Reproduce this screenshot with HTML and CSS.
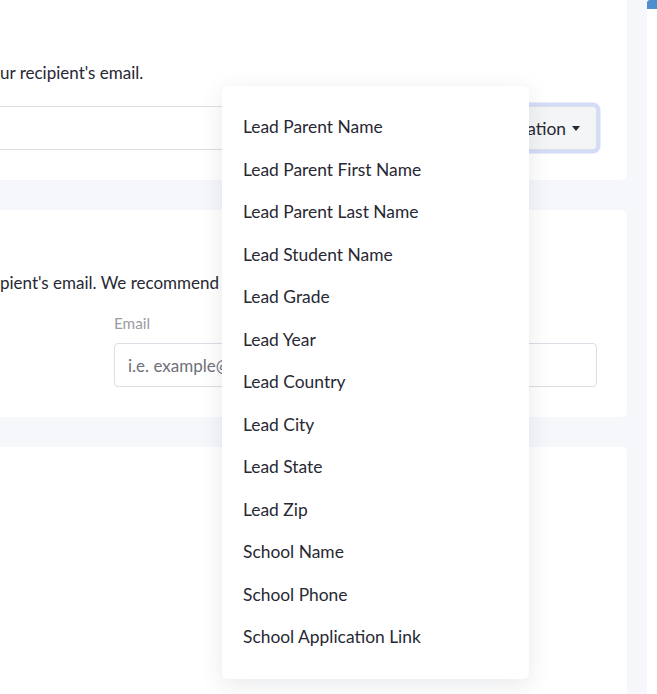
FILE: index.html
```html
<!DOCTYPE html>
<html lang="en">
<head>
<meta charset="utf-8">
<title>Personalization</title>
<link rel="stylesheet" href="styles.css">
</head>
<body>
<div class="layout">
  <main class="main">
    <section class="card card-subject">
      <p class="hint">ur recipient's email.</p>
      <div class="input-group">
        <input class="input input-flat" type="text">
        <button class="btn-personalize" type="button">Personalization<span class="caret"></span></button>
      </div>
    </section>
    <section class="card card-body">
      <p class="hint">pient's email. We recommend</p>
      <div class="field">
        <label class="label">Email</label>
        <input class="input input-email" type="text" placeholder="i.e. example@email.com">
      </div>
    </section>
    <section class="card card-empty"></section>
  </main>
  <aside class="side">
    <div class="side-tab"></div>
  </aside>
</div>
<ul class="dropdown">
  <li>Lead Parent Name</li>
  <li>Lead Parent First Name</li>
  <li>Lead Parent Last Name</li>
  <li>Lead Student Name</li>
  <li>Lead Grade</li>
  <li>Lead Year</li>
  <li>Lead Country</li>
  <li>Lead City</li>
  <li>Lead State</li>
  <li>Lead Zip</li>
  <li>School Name</li>
  <li>School Phone</li>
  <li>School Application Link</li>
</ul>
</body>
</html>
```
FILE: styles.css
```css
* { box-sizing: border-box; }
html, body { margin: 0; padding: 0; }
body {
  font-family: Lato, "Noto Sans", sans-serif;
  color: #272833;
  background: #ffffff;
  width: 657px;
  height: 694px;
  overflow: hidden;
  position: relative;
}
.layout {
  display: grid;
  grid-template-columns: 647px 10px;
  height: 694px;
}
.main {
  background: #f6f7fb;
  padding-right: 20px;
  display: flex;
  flex-direction: column;
  gap: 30px;
}
.card {
  background: #ffffff;
  border-radius: 0 0 5px 0;
}
.card-body { border-radius: 0 5px 5px 0; }
.card-subject { padding: 61px 30px 30px 0; }
.card-body { padding: 61px 30px 30px 0; }
.card-empty { flex: 1; border-radius: 0 5px 0 0; }
.hint {
  margin: 0;
  font-size: 17px;
  line-height: 24px;
  white-space: nowrap;
}
.input-group {
  display: flex;
  margin-top: 21px;
  height: 44px;
}
.input {
  font-family: inherit;
  font-size: 17px;
  height: 44px;
  border: 1px solid #dedde6;
  background: #fff;
  outline: none;
}
.input-flat {
  flex: 1;
  border-left: none;
  border-right: none;
}
.btn-personalize {
  font-family: inherit;
  font-size: 17.4px;
  color: #272833;
  background: #f4f5f7;
  border: 1px solid #dcdde6;
  border-radius: 0 4px 4px 0;
  padding: 0 16px 0 14px;
  height: 44px;
  box-shadow: 0 0 0 3.5px #d4ddf8;
  display: flex;
  align-items: center;
  white-space: nowrap;
}
.caret {
  display: inline-block;
  margin-left: 6px;
  border-left: 4px solid transparent;
  border-right: 4px solid transparent;
  border-top: 5px solid #272833;
}
.field {
  margin: 18px 0 0 114px;
  display: flex;
  flex-direction: column;
}
.label {
  font-size: 15.3px;
  line-height: 21px;
  color: #9b9ba3;
  margin-bottom: 9px;
}
.input-email {
  border-radius: 4px;
  padding: 0 13px;
  width: 100%;
}
.input-email::placeholder { color: #6f7079; }
.side { background: #ffffff; }
.side-tab {
  height: 9px;
  background: #4d8fcf;
  border-radius: 3px 0 0 0;
}
.dropdown {
  position: absolute;
  left: 222px;
  top: 86px;
  width: 307px;
  margin: 0;
  padding: 20px 0;
  list-style: none;
  background: #ffffff;
  border-radius: 6px;
  box-shadow: 0 6px 24px rgba(30, 35, 60, 0.10);
}
.dropdown li {
  padding: 10px 21px;
  font-size: 17.4px;
  line-height: 22.5px;
  color: #272833;
  white-space: nowrap;
}
```
